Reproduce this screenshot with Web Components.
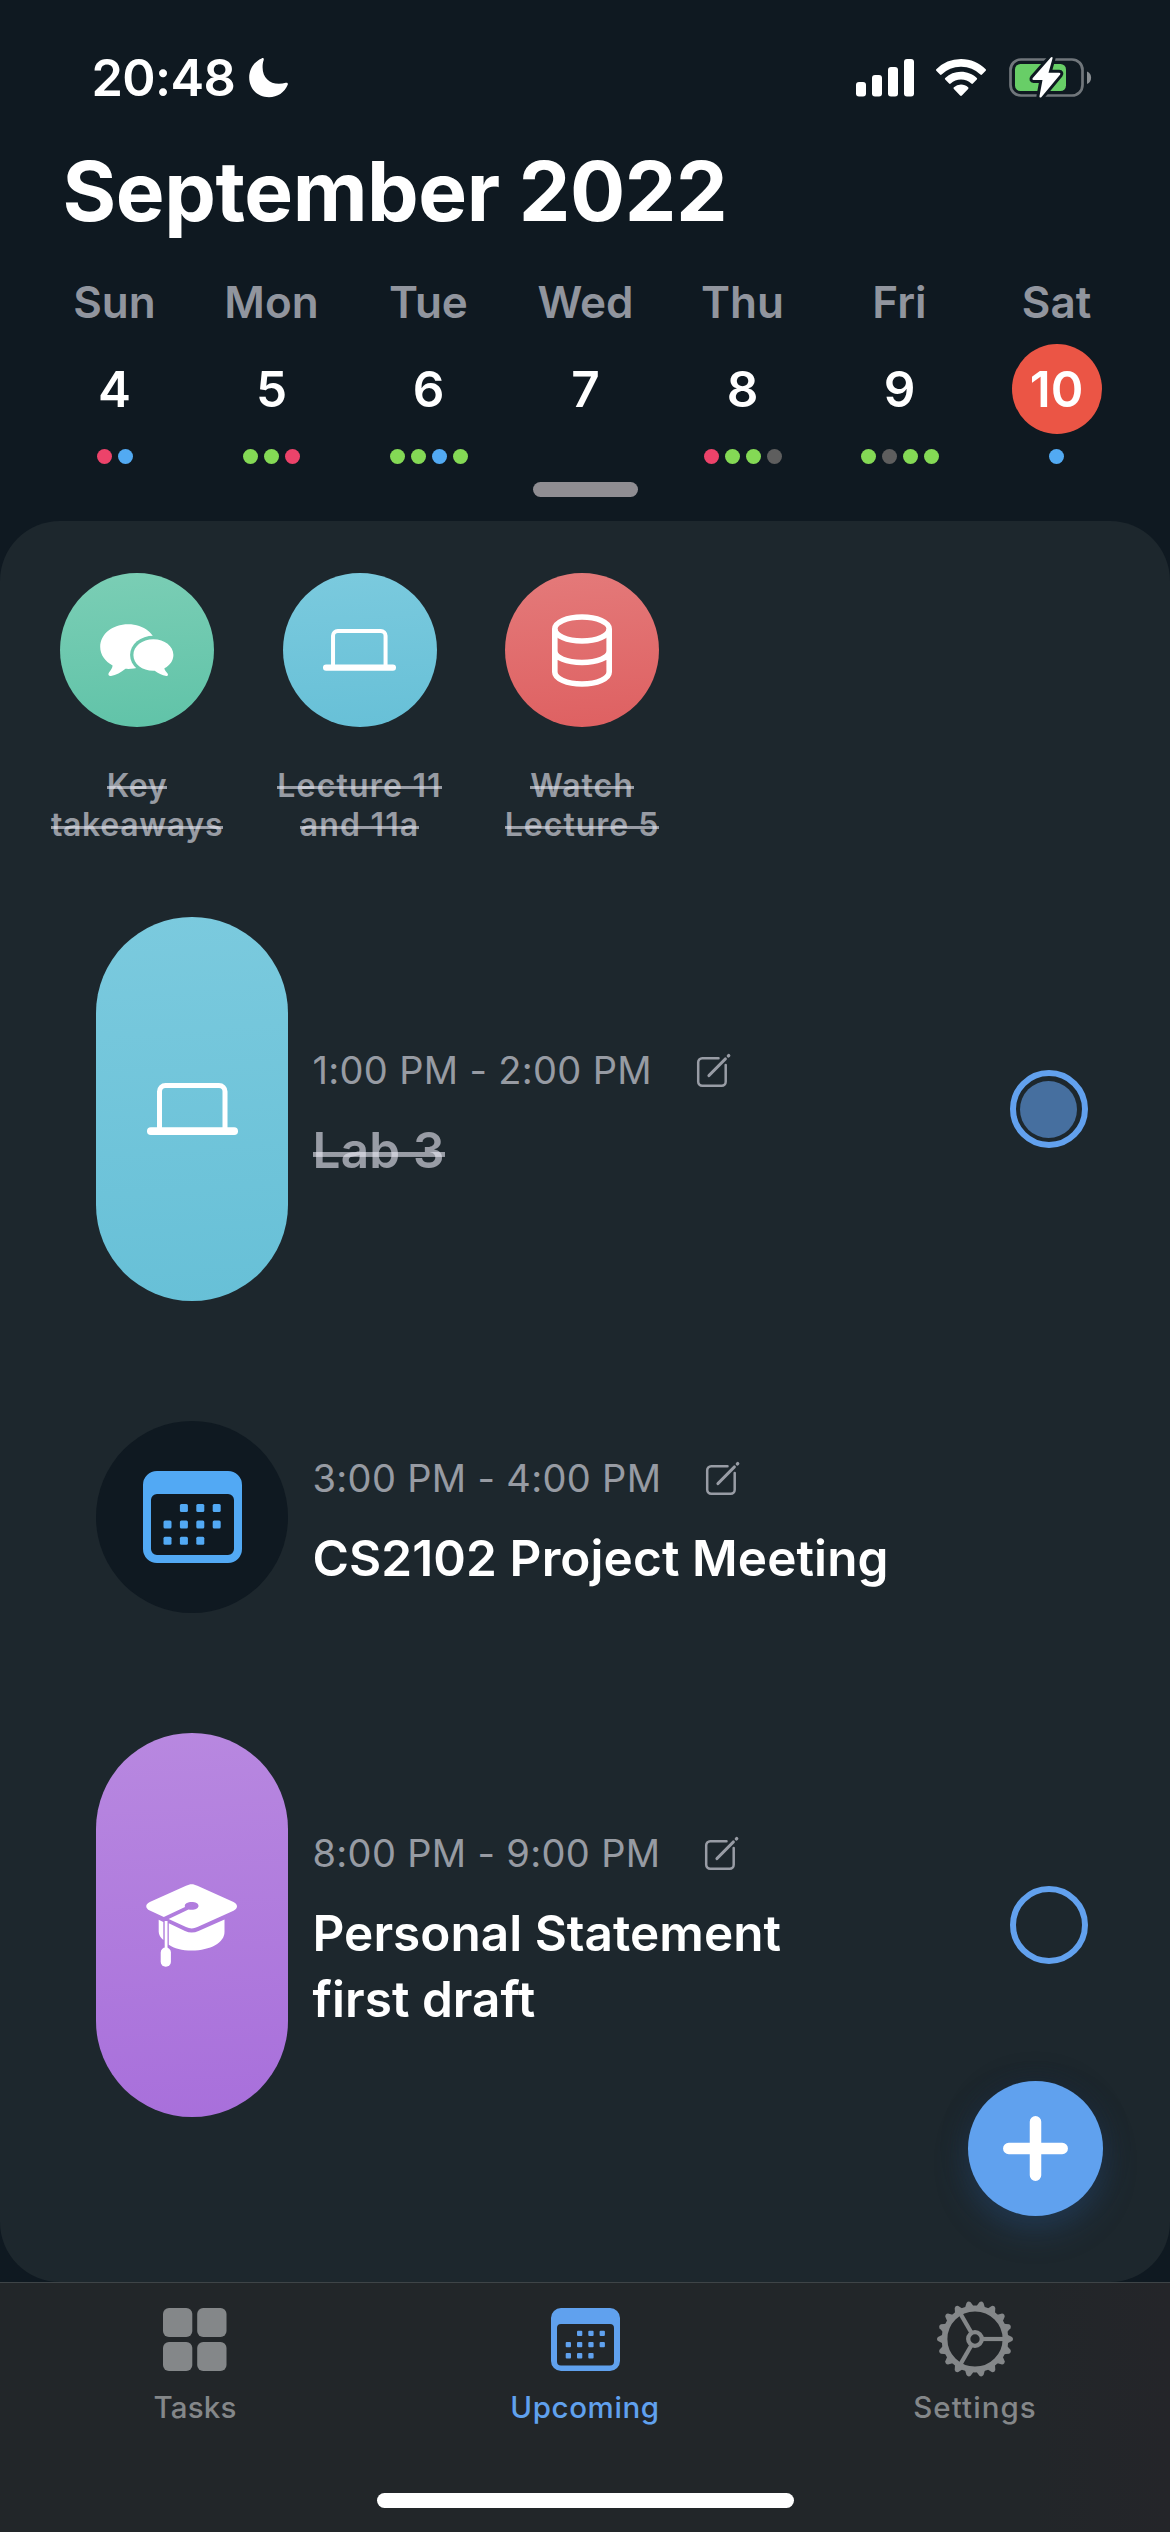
<!DOCTYPE html>
<html lang="en">
<head>
<meta charset="utf-8">
<title>Upcoming</title>
<style>
  html, body { margin: 0; padding: 0; background: #0f1921; }
  body { width: 1170px; height: 2532px; overflow: hidden; font-family: Inter, "Liberation Sans", sans-serif; color: #fff; }
</style>
</head>
<body>
<planner-app></planner-app>

<script>
const ICONS = {
  moon: [39, 40, `<path fill="#fff" d="M12.6.4c1.2-.8 2.6-.1 2.1 1.5C13.700 4.700 13.600 7.200 13.600 9.500c0 9.800 6.600 16.300 16.300 16.300 2.500 0 4.700-.4 6.800-1 1.500-.5 2.600.5 2 2C35.500 34.600 28.500 39.200 20 39.200 8.600 39.200.2 30.900.2 19.600.2 11.200 5 3.600 12.600.4z"/>`],
  signal: [58, 38, `<g fill="#fff"><rect x="0" y="23" width="10" height="14.500" rx="3"/><rect x="16" y="16" width="10" height="21.500" rx="3"/><rect x="32" y="8" width="10" height="29.500" rx="3"/><rect x="48" y="0" width="10" height="37.500" rx="3"/></g>`],
  wifi: [50, 38, `<g fill="#fff"><path d="M25 0C34.700 0 43.500 3.800 49.700 10.200c.5.5.5 1.100 0 1.600l-3.700 3.800c-.5.5-1.100.5-1.600 0A27.500 27.500 0 0 0 25 7.800 27.500 27.500 0 0 0 5.600 15.600c-.5.500-1.100.5-1.600 0L.3 11.800c-.5-.5-.5-1.100 0-1.600A34.800 34.800 0 0 1 25 0z"/><path d="M25 12.800c6.100 0 11.600 2.300 15.800 6.200.5.500.5 1.100 0 1.600l-3.900 4c-.5.500-1.100.5-1.600 0A15 15 0 0 0 25 20.600a15 15 0 0 0-10.300 4c-.5.500-1.100.5-1.600 0l-3.900-4c-.5-.5-.5-1.100 0-1.600A23 23 0 0 1 25 12.800z"/><path d="M25 25.500c2.700 0 5.200 1 7.100 2.700.6.500.5 1.100 0 1.700l-6.200 6.600c-.6.600-1.200.6-1.800 0l-6.200-6.600c-.5-.6-.6-1.200 0-1.700A10.600 10.600 0 0 1 25 25.500z"/></g>`],
  battery: [83, 42, `<rect x="1.500" y="2.500" width="72" height="36" rx="10.500" fill="none" stroke="#70767b" stroke-width="2.700"/><path d="M78 14.500c5.500 2 5.500 10.500 0 12.500z" fill="#888d91"/><rect x="6" y="7" width="51" height="27" rx="5.500" fill="#68ce67"/><path d="M43.500 1.500c.4-1.300-.7-2-1.700-.9L23.800 21c-.8 1-.4 1.900.7 1.900h9l-3 16c-.3 1.500 1 2.100 2 1L51 17.700c.8-1 .3-1.900-.8-1.900H39.500z" fill="#fff" stroke="#0f1921" stroke-width="6" paint-order="stroke" stroke-linejoin="round"/>`],
  chat: [74, 53, `<mask id="m"><rect width="74" height="53" fill="#fff"/><ellipse cx="53.400" cy="31" rx="23.300" ry="19.300" fill="#000"/></mask><path mask="url(#m)" fill="#fff" d="M28.200.200C44 .200 56 10 56 22.500S44 44.900 28.200 44.900c-.9 0-1.800 0-2.700-.1C21 48.200 16 51.500 11 52c-2.500.2-3.300-1.700-2-3.600 1.800-2.300 3.500-4.600 3.600-7C5 37.200.2 30.700.2 22.900.200 10 12.500.2 28.200.2z"/><path fill="#fff" d="M53.400 15.200c11.300 0 20 6.900 20 15.800 0 5.700-3.500 10.500-9 13.300 0 1.700 1.600 3.400 3 5 1.200 1.500.5 2.900-1.200 2.700-4-.5-8.400-3-11.500-5.200h-1.300c-11.300 0-20-6.900-20-15.800s8.700-15.800 20-15.800z"/>`],
  laptop: [91, 52, `<path d="M12.500 46V8.500a6 6 0 0 1 6-6h53.500a6 6 0 0 1 6 6V46" fill="none" stroke="#fff" stroke-width="5"/><rect x="0" y="44.300" width="91" height="7.700" rx="3.800" fill="#fff"/>`],
  database: [60, 73, `<g fill="none" stroke="#fff" stroke-width="5.600"><ellipse cx="30" cy="15" rx="27.200" ry="12"/><path d="M2.800 15v43c0 6.600 12 12 27.200 12s27.200-5.400 27.200-12V15M2.800 37c0 6.600 12 11.500 27.200 11.500S57.200 43.600 57.200 37"/></g>`],
  calendar: [99, 92, `<path fill-rule="evenodd" fill="currentColor" d="M14 0H85A14 14 0 0 1 99 14V78A14 14 0 0 1 85 92H14A14 14 0 0 1 0 78V14A14 14 0 0 1 14 0zM14 23a6 6 0 0 0-6 6V78a6 6 0 0 0 6 6H85a6 6 0 0 0 6-6V29a6 6 0 0 0-6-6z"/><g fill="currentColor">${[[1,0],[2,0],[3,0],[0,1],[1,1],[2,1],[3,1],[0,2],[1,2],[2,2]].map(([c, r]) => `<rect x="${20.500 + c * 16.400}" y="${33 + r * 16.400}" width="8" height="8" rx="1.500"/>`).join('')}</g>`],
  calendarTab: [69, 63, `<path fill-rule="evenodd" fill="currentColor" d="M10 0H59A10 10 0 0 1 69 10V53A10 10 0 0 1 59 63H10A10 10 0 0 1 0 53V10A10 10 0 0 1 10 0zM10 16a4 4 0 0 0-4 4V53.500a4 4 0 0 0 4 4H59a4 4 0 0 0 4-4V20a4 4 0 0 0-4-4z"/><g fill="currentColor">${[[1,0],[2,0],[3,0],[0,1],[1,1],[2,1],[3,1],[0,2],[1,2],[2,2]].map(([c, r]) => `<rect x="${14.700 + c * 11.300}" y="${22.700 + r * 11.200}" width="5.300" height="5.300" rx="1"/>`).join('')}</g>`],
  gradcap: [92, 83, `<g fill="#fff"><path d="M40 1.800c4-2.200 7.400-2.200 11.400 0L87.500 18c4.700 2.300 4.700 6.500 0 8.800L51.400 43c-4 1.900-7.400 1.900-11.400 0L22.600 35 42.500 25.400c4.500 1.200 10-.2 10-3.400 0-2.400-3-3.900-6.900-3.900S38.800 19.700 38.800 22c0 .4.100.7.200 1L17.800 33 3.800 26.600c-4.700-2.300-4.700-6.300 0-8.600z"/><path d="M22.800 39.200 39 47c4.500 2.100 9 2.100 13.500 0L78.500 35.500V48c0 10.600-14 18.500-32.700 18.500-9.700 0-17.800-2.200-23-5.800z"/><path d="M12.700 35.700 17.300 38v18C14.300 53.500 12.700 50.700 12.700 47.500z"/><rect x="18.700" y="37" width="2.800" height="30"/><rect x="14.700" y="63.500" width="10.200" height="19.300" rx="5"/></g>`],
  edit: [34, 33, `<g fill="none" stroke="currentColor" stroke-width="2.500" stroke-linecap="round" stroke-linejoin="round"><path d="M21.500 4.300H5.200A4 4 0 0 0 1.200 8.300V27.800a4 4 0 0 0 4 4H24.700a4 4 0 0 0 4-4V11"/><path d="M12 21.500 28.300 5" stroke-width="3.200"/><path d="M31.400 1.900l.3-.3" stroke-width="3.400"/></g>`],
  grid: [64, 63, `<g fill="currentColor"><rect width="29.300" height="29" rx="6"/><rect x="34.200" width="29.300" height="29" rx="6"/><rect y="34" width="29.300" height="29" rx="6"/><rect x="34.200" y="34" width="29.300" height="29" rx="6"/></g>`],
  gear: [78, 78, `<g transform="translate(39 39)" stroke="currentColor" fill="none"><circle r="30.500" stroke-width="5.800"/><circle r="6.800" stroke-width="4.300"/>${[0,120,240].map(a => `<path transform="rotate(${a})" d="M8 0H29" stroke-width="4.200"/>`).join('')}${Array.from({length: 18}, (_, i) => `<path transform="rotate(${i * 20})" d="M32 -4.600L37 -2.100Q39 0 37 2.100L32 4.600z" fill="currentColor" stroke="none"/>`).join('')}</g>`],
  plus: [65, 65, `<path d="M32.500 5.800V59.200M5.800 32.500H59.200" stroke="#fff" stroke-width="11.500" stroke-linecap="round"/>`]
};

const define = (name, html) => customElements.define(name, class extends HTMLElement {
  connectedCallback() {
    if (this.shadowRoot) return;
    this.attachShadow({ mode: 'open' }).innerHTML = typeof html === 'function' ? html(this) : html;
  }
});

define('ui-icon', el => {
  const [w, h, body] = ICONS[el.getAttribute('name')];
  const width = +(el.getAttribute('width') || w);
  return `<style>:host{display:block;flex:none;line-height:0}svg{display:block;overflow:visible}</style>
  <svg width="${width}" height="${width * h / w}" viewBox="0 0 ${w} ${h}" fill="none">${body}</svg>`;
});

define('status-bar', `
<style>
  :host { display: flex; height: 156px; align-items: center; box-sizing: border-box; padding: 0 78.500px 0 91.500px; }
  .time { font-size: 50.500px; font-weight: 600; letter-spacing: -.6px; line-height: 60px; width: 157.500px; }
  .right { margin-left: auto; display: flex; align-items: center; gap: 22.500px; }
</style>
<span class="time">20:48</span><ui-icon name="moon"></ui-icon>
<div class="right"><ui-icon name="signal"></ui-icon><ui-icon name="wifi"></ui-icon><ui-icon name="battery"></ui-icon></div>`);

define('month-title', `
<style>:host { display: block; padding-left: 62.500px; font-size: 82px; font-weight: 700; line-height: 71px; letter-spacing: -.43px; white-space: nowrap; }</style><slot></slot>`);

define('day-cell', el => `
<style>
  :host { display: flex; flex-direction: column; align-items: center; width: 157px; }
  .name { font-size: 44px; font-weight: 560; line-height: 54px; color: rgba(235,235,245,.6); letter-spacing: 0; }
  .num { width: 90px; height: 90px; margin-top: 15px; border-radius: 50%; font-size: 49.500px; font-weight: 600; line-height: 90px; text-align: center; }
  :host([today]) .num { background: #eb5545; }
  .dots { display: flex; gap: 6px; height: 15px; margin-top: 15px; }
  i { width: 15px; height: 15px; border-radius: 50%; }
  .p { background: #ec436a } .g { background: #84d955 } .b { background: #52aaf3 } .x { background: #5e5e5e }
</style>
<span class="name">${el.getAttribute('name')}</span><span class="num"><slot></slot></span>
<div class="dots">${[...(el.getAttribute('dots') || '')].map(c => `<i class="${c}"></i>`).join('')}</div>`);

define('week-strip', `
<style>
  :host { display: flex; flex-direction: column; margin-top: 48px; }
  .days { display: flex; padding-left: 36px; }
  .handle { width: 105px; height: 15px; border-radius: 7.500px; background: #8f8d92; margin: 18px auto 24px; }
</style>
<div class="days"><slot></slot></div><div class="handle"></div>`);

define('struck-text', `
<style>
  :host { display: inline; }
  span { color: rgba(235,235,245,.6); -webkit-box-decoration-break: clone; box-decoration-break: clone;
    background: linear-gradient(currentColor, currentColor) 0 .655em / 100% .1em no-repeat; }
</style><span><slot></slot></span>`);

define('task-bubble', el => `
<style>
  :host { display: flex; flex-direction: column; align-items: center; width: 222.500px; }
  .disc { width: 154px; height: 154px; border-radius: 50%; display: flex; align-items: center; justify-content: center; background: var(--fill); }
  .label { margin-top: 38.500px; text-align: center; font-size: 32px; font-weight: 560; line-height: 39.200px; white-space: nowrap; letter-spacing: var(--ls, .7px); }
</style>
<div class="disc"><ui-icon name="${el.getAttribute('icon')}" width="${el.getAttribute('size')}"></ui-icon></div>
<div class="label"><slot></slot></div>`);

define('task-radio', el => `
<style>
  :host { display: flex; width: 78px; height: 78px; box-sizing: border-box; border: 6.500px solid #62a1ee; border-radius: 50%; align-items: center; justify-content: center; }
  i { width: 57px; height: 57px; flex: none; border-radius: 50%; background: #466f9f; }
</style>${el.hasAttribute('checked') ? '<i></i>' : ''}`);

define('event-row', el => `
<style>
  :host { display: flex; align-items: center; padding: 0 82.500px 0 96px; gap: 24.500px; height: var(--h); }
  .pill { width: 192px; height: 100%; border-radius: 96px; flex: none; display: flex; align-items: center; justify-content: center; background: var(--fill); color: #52a9f4; }
  .text { flex: 1; display: flex; flex-direction: column; gap: 12px; }
  .when { display: flex; align-items: center; height: 70px; gap: 26.500px; font-size: 38px; letter-spacing: .33px; line-height: 70px; color: rgba(235,235,245,.6); white-space: nowrap; }
  .edit { width: 71px; height: 66px; display: flex; align-items: center; justify-content: center; }
  .title { font-size: 49.500px; font-weight: 600; line-height: 66px; white-space: nowrap; letter-spacing: var(--ls, 0); }
</style>
<div class="pill"><ui-icon name="${el.getAttribute('icon')}"></ui-icon></div>
<div class="text">
  <div class="when"><span>${el.getAttribute('when')}</span><div class="edit"><ui-icon name="edit"></ui-icon></div></div>
  <div class="title"><slot></slot></div>
</div>
<slot name="action"></slot>`);

define('add-button', `
<style>
  :host { position: absolute; right: 67px; bottom: 66px; width: 135px; height: 135px; border-radius: 50%; background: #60a1ee; display: flex; align-items: center; justify-content: center;
    box-shadow: 0 14px 32px rgba(42,85,135,.4), 0 -2px 26px rgba(23,30,44,.45); }
</style><ui-icon name="plus"></ui-icon>`);

define('agenda-sheet', `
<style>
  :host { display: block; position: relative; flex: 1; box-sizing: border-box; background: #1d272d; border-radius: 60px; padding-top: 52px; }
  .bubbles { display: flex; height: 344px; padding-left: 25.800px; }
  .events { display: flex; flex-direction: column; gap: 120px; }
</style>
<div class="bubbles"><slot name="bubble"></slot></div>
<div class="events"><slot></slot></div>
<add-button></add-button>`);

define('tab-item', el => `
<style>
  :host { display: flex; flex: 1; flex-direction: column; align-items: center; color: #848789; }
  :host([active]) { color: #60a1ee; }
  .icon { height: 78px; margin-top: 17px; display: flex; align-items: center; }
  .label { margin-top: 14px; font-size: 29.500px; font-weight: 500; line-height: 30px; letter-spacing: var(--ls, 0); }
</style>
<div class="icon"><ui-icon name="${el.getAttribute('icon')}"></ui-icon></div>
<span class="label"><slot></slot></span>`);

define('tab-bar', `
<style>
  :host { display: flex; flex-direction: column; height: 250px; box-sizing: border-box; border-top: 1px solid #3e4447; background: linear-gradient(90deg, #222629 88%, #242529); }
  .tabs { display: flex; height: 210px; }
  .home { width: 417px; height: 15px; border-radius: 7.500px; background: #fff; margin: 0 auto; }
</style>
<div class="tabs"><slot></slot></div><div class="home"></div>`);

define('planner-app', `
<style>
  :host { display: flex; flex-direction: column; width: 1170px; height: 2532px; background: #0f1921; overflow: hidden; }
  .blue { --fill: linear-gradient(176deg, #7bcade, #67c0d7); }
  .green { --fill: linear-gradient(175deg, #7bceb5, #60c3a8); }
  .red { --fill: linear-gradient(175deg, #e47a7a, #de6061); }
  .purple { --fill: linear-gradient(176deg, #b888e0, #a86fdb); }
  .dark { --fill: #0f1921; }
</style>
<status-bar></status-bar>
<month-title>September 2022</month-title>
<week-strip>
  <day-cell name="Sun" dots="pb">4</day-cell>
  <day-cell name="Mon" dots="ggp">5</day-cell>
  <day-cell name="Tue" dots="ggbg">6</day-cell>
  <day-cell name="Wed">7</day-cell>
  <day-cell name="Thu" dots="pggx">8</day-cell>
  <day-cell name="Fri" dots="gxgg">9</day-cell>
  <day-cell name="Sat" dots="b" today>10</day-cell>
</week-strip>
<agenda-sheet>
  <task-bubble slot="bubble" class="green" icon="chat" size="74"><struck-text>Key<br>takeaways</struck-text></task-bubble>
  <task-bubble slot="bubble" class="blue" icon="laptop" size="73" style="--ls:1.200px"><struck-text>Lecture 11<br>and 11a</struck-text></task-bubble>
  <task-bubble slot="bubble" class="red" icon="database" size="60" style="--ls:1px"><struck-text>Watch<br>Lecture 5</struck-text></task-bubble>
  <event-row class="blue" style="--h:384px;--ls:.18px" icon="laptop" when="1:00 PM - 2:00 PM"><struck-text>Lab 3</struck-text><task-radio slot="action" checked></task-radio></event-row>
  <event-row class="dark" style="--h:192px;--ls:.1px" icon="calendar" when="3:00 PM - 4:00 PM">CS2102 Project Meeting</event-row>
  <event-row class="purple" style="--h:384px;--ls:.02px" icon="gradcap" when="8:00 PM - 9:00 PM">Personal Statement<br>first draft<task-radio slot="action"></task-radio></event-row>
</agenda-sheet>
<tab-bar>
  <tab-item icon="grid" style="--ls:.2px">Tasks</tab-item>
  <tab-item icon="calendarTab" active style="--ls:.6px">Upcoming</tab-item>
  <tab-item icon="gear" style="--ls:1.060px">Settings</tab-item>
</tab-bar>`);
</script>
</body>
</html>
